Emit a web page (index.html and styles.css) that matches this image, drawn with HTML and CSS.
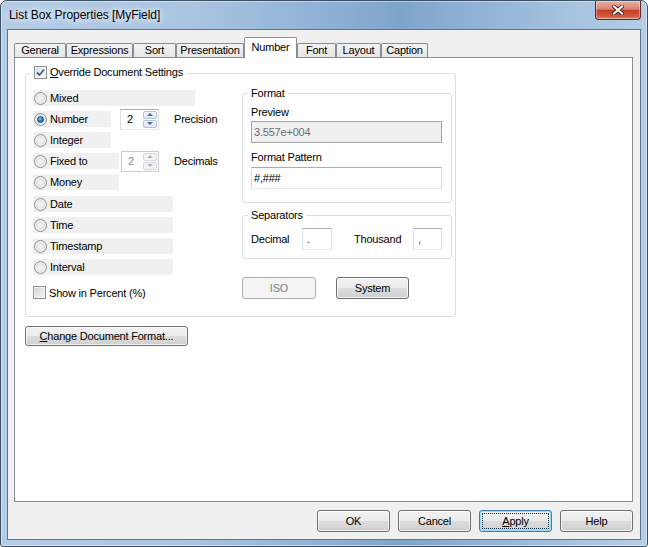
FILE: index.html
```html
<!DOCTYPE html>
<html>
<head>
<meta charset="utf-8">
<title>List Box Properties</title>
<link rel="stylesheet" href="styles.css">
</head>
<body>
<div class="window">
  <div class="titlebar">
    <span class="title">List Box Properties [MyField]</span>
    <span class="close"><svg width="12" height="10" viewBox="0 0 12 10"><path d="M2 1.5 L10 8.5 M10 1.5 L2 8.5" stroke="#3b1510" stroke-width="3.8" stroke-linecap="square"/><path d="M2 1.5 L10 8.5 M10 1.5 L2 8.5" stroke="#fff" stroke-width="2.2" stroke-linecap="square"/></svg></span>
  </div>
  <div class="client">
    <div class="tabs">
      <div class="tab t-general">General</div>
      <div class="tab t-expr">Expressions</div>
      <div class="tab t-sort">Sort</div>
      <div class="tab t-pres">Presentation</div>
      <div class="tab t-num active">Number</div>
      <div class="tab t-font">Font</div>
      <div class="tab t-layout">Layout</div>
      <div class="tab t-caption">Caption</div>
    </div>
    <div class="panel">
      <div class="group override">
        <div class="legend legend-check"><span class="check checked"><svg width="11" height="11" viewBox="0 0 11 11"><path d="M2 5.5 L4.5 8 L9 2.5" fill="none" stroke="#4a5f8f" stroke-width="1.8"/></svg></span><span class="lg-text"><u>O</u>verride Document Settings</span></div>
        <div class="cols">
          <div class="left">
            <div class="rows">
              <div class="row"><div class="opt w-mixed"><span class="radio"></span>Mixed</div></div>
              <div class="row"><div class="opt w-num"><span class="radio on"><span class="dot"></span></span>Number</div>
                <div class="spin spin-num"><span class="spin-val">2</span><span class="spinbtns"><span class="sb"><span class="up"></span></span><span class="sb"><span class="down"></span></span></span></div>
                <span class="side-lbl">Precision</span></div>
              <div class="row"><div class="opt w-num"><span class="radio"></span>Integer</div></div>
              <div class="row"><div class="opt w-fixed"><span class="radio"></span>Fixed to</div>
                <div class="spin spin-fixed disabled"><span class="spin-val">2</span><span class="spinbtns"><span class="sb"><span class="up"></span></span><span class="sb"><span class="down"></span></span></span></div>
                <span class="side-lbl">Decimals</span></div>
              <div class="row"><div class="opt w-fixed"><span class="radio"></span>Money</div></div>
              <div class="row row-shift"><div class="opt w-long"><span class="radio"></span>Date</div></div>
              <div class="row"><div class="opt w-long"><span class="radio"></span>Time</div></div>
              <div class="row"><div class="opt w-long"><span class="radio"></span>Timestamp</div></div>
              <div class="row"><div class="opt w-long"><span class="radio"></span>Interval</div></div>
            </div>
            <div class="pct"><span class="check"></span>Show in Percent (%)</div>
          </div>
          <div class="right">
            <div class="group fmt">
              <div class="legend">Format</div>
              <div class="lbl lbl-first">Preview</div>
              <div class="box preview">3.557e+004</div>
              <div class="lbl lbl-second">Format Pattern</div>
              <div class="box input">#,###</div>
            </div>
            <div class="group sep">
              <div class="legend">Separators</div>
              <div class="seprow">
                <span class="dec-lbl">Decimal</span>
                <span class="box small dec-in">.</span>
                <span class="th-lbl">Thousand</span>
                <span class="box small th-in">,</span>
              </div>
            </div>
            <div class="isorow">
              <button class="btn iso" disabled>ISO</button>
              <button class="btn system">System</button>
            </div>
          </div>
        </div>
      </div>
      <button class="btn cdf"><u>C</u>hange Document Format...</button>
    </div>
    <div class="footer">
      <button class="btn fbtn">OK</button>
      <button class="btn fbtn">Cancel</button>
      <button class="btn fbtn focused"><u>A</u>pply</button>
      <button class="btn fbtn">Help</button>
    </div>
  </div>
</div>
</body>
</html>
```

FILE: styles.css
```css
* { box-sizing: border-box; }
html, body { margin: 0; padding: 0; }
body {
  width: 648px;
  height: 547px;
  overflow: hidden;
  background: #ffffff;
  font-family: "Liberation Sans", Arial, sans-serif;
  font-size: 11px;
  letter-spacing: -0.2px;
  color: #000;
}
u { text-decoration: underline; text-underline-offset: 1px; }

.window {
  width: 648px;
  height: 547px;
  border: 1px solid #3d4f63;
  border-radius: 7px 7px 3px 3px;
  background: linear-gradient(90deg, #b4cce6 0%, #a9c4e1 30%, #8fb1d5 50%, #7fa4cb 62%, #9dbcdc 82%, #b6cee6 100%);
  box-shadow: inset 0 0 0 1px rgba(255,255,255,0.45);
  display: flex;
  flex-direction: column;
}

.titlebar {
  height: 28px;
  display: flex;
  justify-content: space-between;
  align-items: flex-start;
}
.title {
  margin: 7px 0 0 8px;
  font-size: 12px;
  line-height: 15px;
  letter-spacing: -0.05px;
  color: #000;
  text-shadow: 0 0 6px #fff, 0 0 10px rgba(255,255,255,0.9);
}
.close {
  width: 46px;
  height: 19px;
  margin-right: 6px;
  border: 1px solid #5e2a22;
  border-top: none;
  border-radius: 0 0 4px 4px;
  background: linear-gradient(#eab0a3 0%, #dc8370 45%, #c5402a 52%, #cf5b3f 85%, #e08a6c 100%);
  box-shadow: inset 0 0 0 1px rgba(255,255,255,0.35);
  display: flex;
  align-items: center;
  justify-content: center;
}

.client {
  flex: 1;
  margin: 0 6px 6px 6px;
  border: 1px solid #5f7389;
  background: #f0f0f0;
  display: flex;
  flex-direction: column;
  padding: 7px 7px 7px 6px;
}

.tabs {
  height: 20px;
  display: flex;
  align-items: flex-end;
}
.tab {
  height: 14px;
  border: 1px solid #898c95;
  border-bottom: none;
  border-radius: 2px 2px 0 0;
  background: linear-gradient(#f3f3f3, #e6e6e6);
  text-align: center;
  line-height: 12px;
  white-space: nowrap;
}
.tab.active {
  height: 21px;
  margin-bottom: -1px;
  position: relative;
  z-index: 1;
  background: #fff;
  line-height: 12px;
  padding-top: 3px;
}
.t-general { width: 52px; }
.t-expr { width: 67px; }
.t-sort { width: 43px; }
.t-pres { width: 68px; }
.t-num { width: 53px; }
.t-font { width: 39px; }
.t-layout { width: 45px; }
.t-caption { width: 47px; }

.panel {
  flex: 1;
  border: 1px solid #898c95;
  background: #fff;
  padding: 15px 0 0 10px;
  display: flex;
  flex-direction: column;
  align-items: flex-start;
}

.group {
  border: 1px solid #d5dfe5;
  border-radius: 3px;
  display: flex;
  flex-direction: column;
}
.legend {
  align-self: flex-start;
  height: 13px;
  line-height: 13px;
  margin: -7px 0 0 -3px;
  padding: 0 3px;
  background: #fff;
  white-space: nowrap;
}
.legend-check {
  display: flex;
  align-items: center;
  margin-top: -8px;
  padding: 0 3px 0 4px;
}
.lg-text { margin-left: 3px; }

.override {
  width: 431px;
  padding: 0 2px 17px 7px;
}
.cols {
  display: flex;
  margin-top: 11px;
}
.left {
  width: 209px;
  display: flex;
  flex-direction: column;
}
.rows {
  display: flex;
  flex-direction: column;
  gap: 5px;
}
.row {
  height: 16px;
  display: flex;
  align-items: center;
}
.row-shift { margin-top: 1px; }
.opt {
  height: 16px;
  background: #f0f0f0;
  display: flex;
  align-items: center;
  padding-left: 1px;
  white-space: nowrap;
}
.w-mixed { width: 162px; }
.w-num { width: 78px; }
.w-fixed { width: 86px; }
.w-long { width: 140px; }

.radio {
  width: 13px;
  height: 13px;
  flex: none;
  border-radius: 50%;
  border: 1px solid #8f9193;
  background: radial-gradient(circle at 50% 50%, #f6f6f6 0%, #e4e4e4 55%, #cfcfcf 100%);
  box-shadow: inset 0 0 0 1px #f2f2f2;
  margin-right: 3px;
  display: flex;
  align-items: center;
  justify-content: center;
}
.radio .dot {
  width: 7px;
  height: 7px;
  border-radius: 50%;
  background: radial-gradient(circle at 40% 35%, #8fd3fb 0%, #2a83cf 45%, #0c3f7a 100%);
  border: 1px solid #1c4d84;
}

.check {
  width: 13px;
  height: 13px;
  flex: none;
  border: 1px solid #8e8f8f;
  background: linear-gradient(135deg, #c9ced4 0%, #e9ebee 60%, #f7f7f7 100%);
  box-shadow: inset 0 0 0 1px #f4f4f4;
  display: flex;
  align-items: center;
  justify-content: center;
}
.check.checked { background: linear-gradient(135deg, #d8dce1 0%, #f1f2f4 60%, #fbfbfb 100%); }

.spin {
  height: 21px;
  flex: none;
  border: 1px solid #abadb3;
  border-left-color: #dbdfe6;
  border-right-color: #dbdfe6;
  border-bottom-color: #e3e9ef;
  background: #fff;
  display: flex;
  align-items: center;
}
.spin-num { width: 39px; margin-left: 9px; }
.spin-fixed { width: 38px; margin-left: 2px; }
.spin-val { padding-left: 6px; line-height: 13px; }
.spinbtns {
  margin-left: auto;
  width: 16px;
  height: 19px;
  padding: 1px 1px 1px 1px;
  display: flex;
  flex-direction: column;
  gap: 1px;
}
.sb {
  flex: 1;
  border: 1px solid #b6c3d3;
  border-radius: 2px;
  background: linear-gradient(#f7f9fb, #dde5ee);
  display: flex;
  align-items: center;
  justify-content: center;
}
.up { width: 0; height: 0; border-left: 3px solid transparent; border-right: 3px solid transparent; border-bottom: 3px solid #3e6aa8; }
.down { width: 0; height: 0; border-left: 3px solid transparent; border-right: 3px solid transparent; border-top: 3px solid #3e6aa8; }
.spin.disabled { border-color: #c9ccd1; }
.spin.disabled .spin-val { color: #8a8a8a; }
.spin.disabled .sb { border-color: #d5d8dc; background: #f4f4f4; }
.spin.disabled .up { border-bottom-color: #b2b2b2; }
.spin.disabled .down { border-top-color: #b2b2b2; }
.side-lbl { margin-left: 15px; white-space: nowrap; }

.pct {
  margin-top: 11px;
  height: 13px;
  display: flex;
  align-items: center;
  white-space: nowrap;
}
.pct .check { margin-right: 3px; }

.right {
  width: 210px;
  margin-top: 3px;
  display: flex;
  flex-direction: column;
}
.fmt { padding: 0 9px 13px 8px; }
.lbl { line-height: 13px; white-space: nowrap; }
.lbl-first { margin-top: 6px; }
.lbl-second { margin-top: 8px; }
.box {
  height: 22px;
  border: 1px solid #abadb3;
  border-left-color: #dbdfe6;
  border-right-color: #dbdfe6;
  border-bottom-color: #e3e9ef;
  background: #fff;
  display: flex;
  align-items: center;
  padding-left: 2px;
}
.preview {
  margin-top: 2px;
  background: #f0f0f0;
  border-color: #a3a3a3;
  color: #6d6d6d;
}
.input { margin-top: 3px; }

.sep {
  margin-top: 12px;
  padding: 0 9px 8px 8px;
}
.seprow {
  margin-top: 6px;
  height: 22px;
  display: flex;
  align-items: center;
}
.dec-lbl { width: 51px; }
.th-lbl { width: 59px; margin-left: 22px; }
.small { padding-left: 4px; color: #4a2f7a; }
.dec-in { width: 30px; }
.th-in { width: 29px; }

.isorow {
  margin-top: 18px;
  display: flex;
  gap: 20px;
}

.btn {
  height: 22px;
  border: 1px solid #707070;
  border-radius: 3px;
  background: linear-gradient(#f2f2f2 0%, #ebebeb 49%, #dddddd 50%, #cfcfcf 100%);
  box-shadow: inset 0 0 0 1px rgba(255,255,255,0.7);
  font-family: inherit;
  font-size: 11px;
  letter-spacing: -0.2px;
  color: #000;
  padding: 0;
  text-align: center;
  white-space: nowrap;
}
.btn:disabled {
  border-color: #adb2b5;
  background: #f4f4f4;
  box-shadow: none;
  color: #838383;
}
.iso { width: 74px; }
.system { width: 73px; }
.cdf {
  width: 163px;
  height: 20px;
  margin-top: 9px;
}

.footer {
  margin-top: 8px;
  display: flex;
  justify-content: flex-end;
  gap: 8px;
}
.fbtn { width: 73px; }
.focused {
  border-color: #3c7fb1;
  box-shadow: inset 0 0 0 1px #97dcf7;
  outline: 1px dotted #1b2a3a;
  outline-offset: -4px;
}
```
